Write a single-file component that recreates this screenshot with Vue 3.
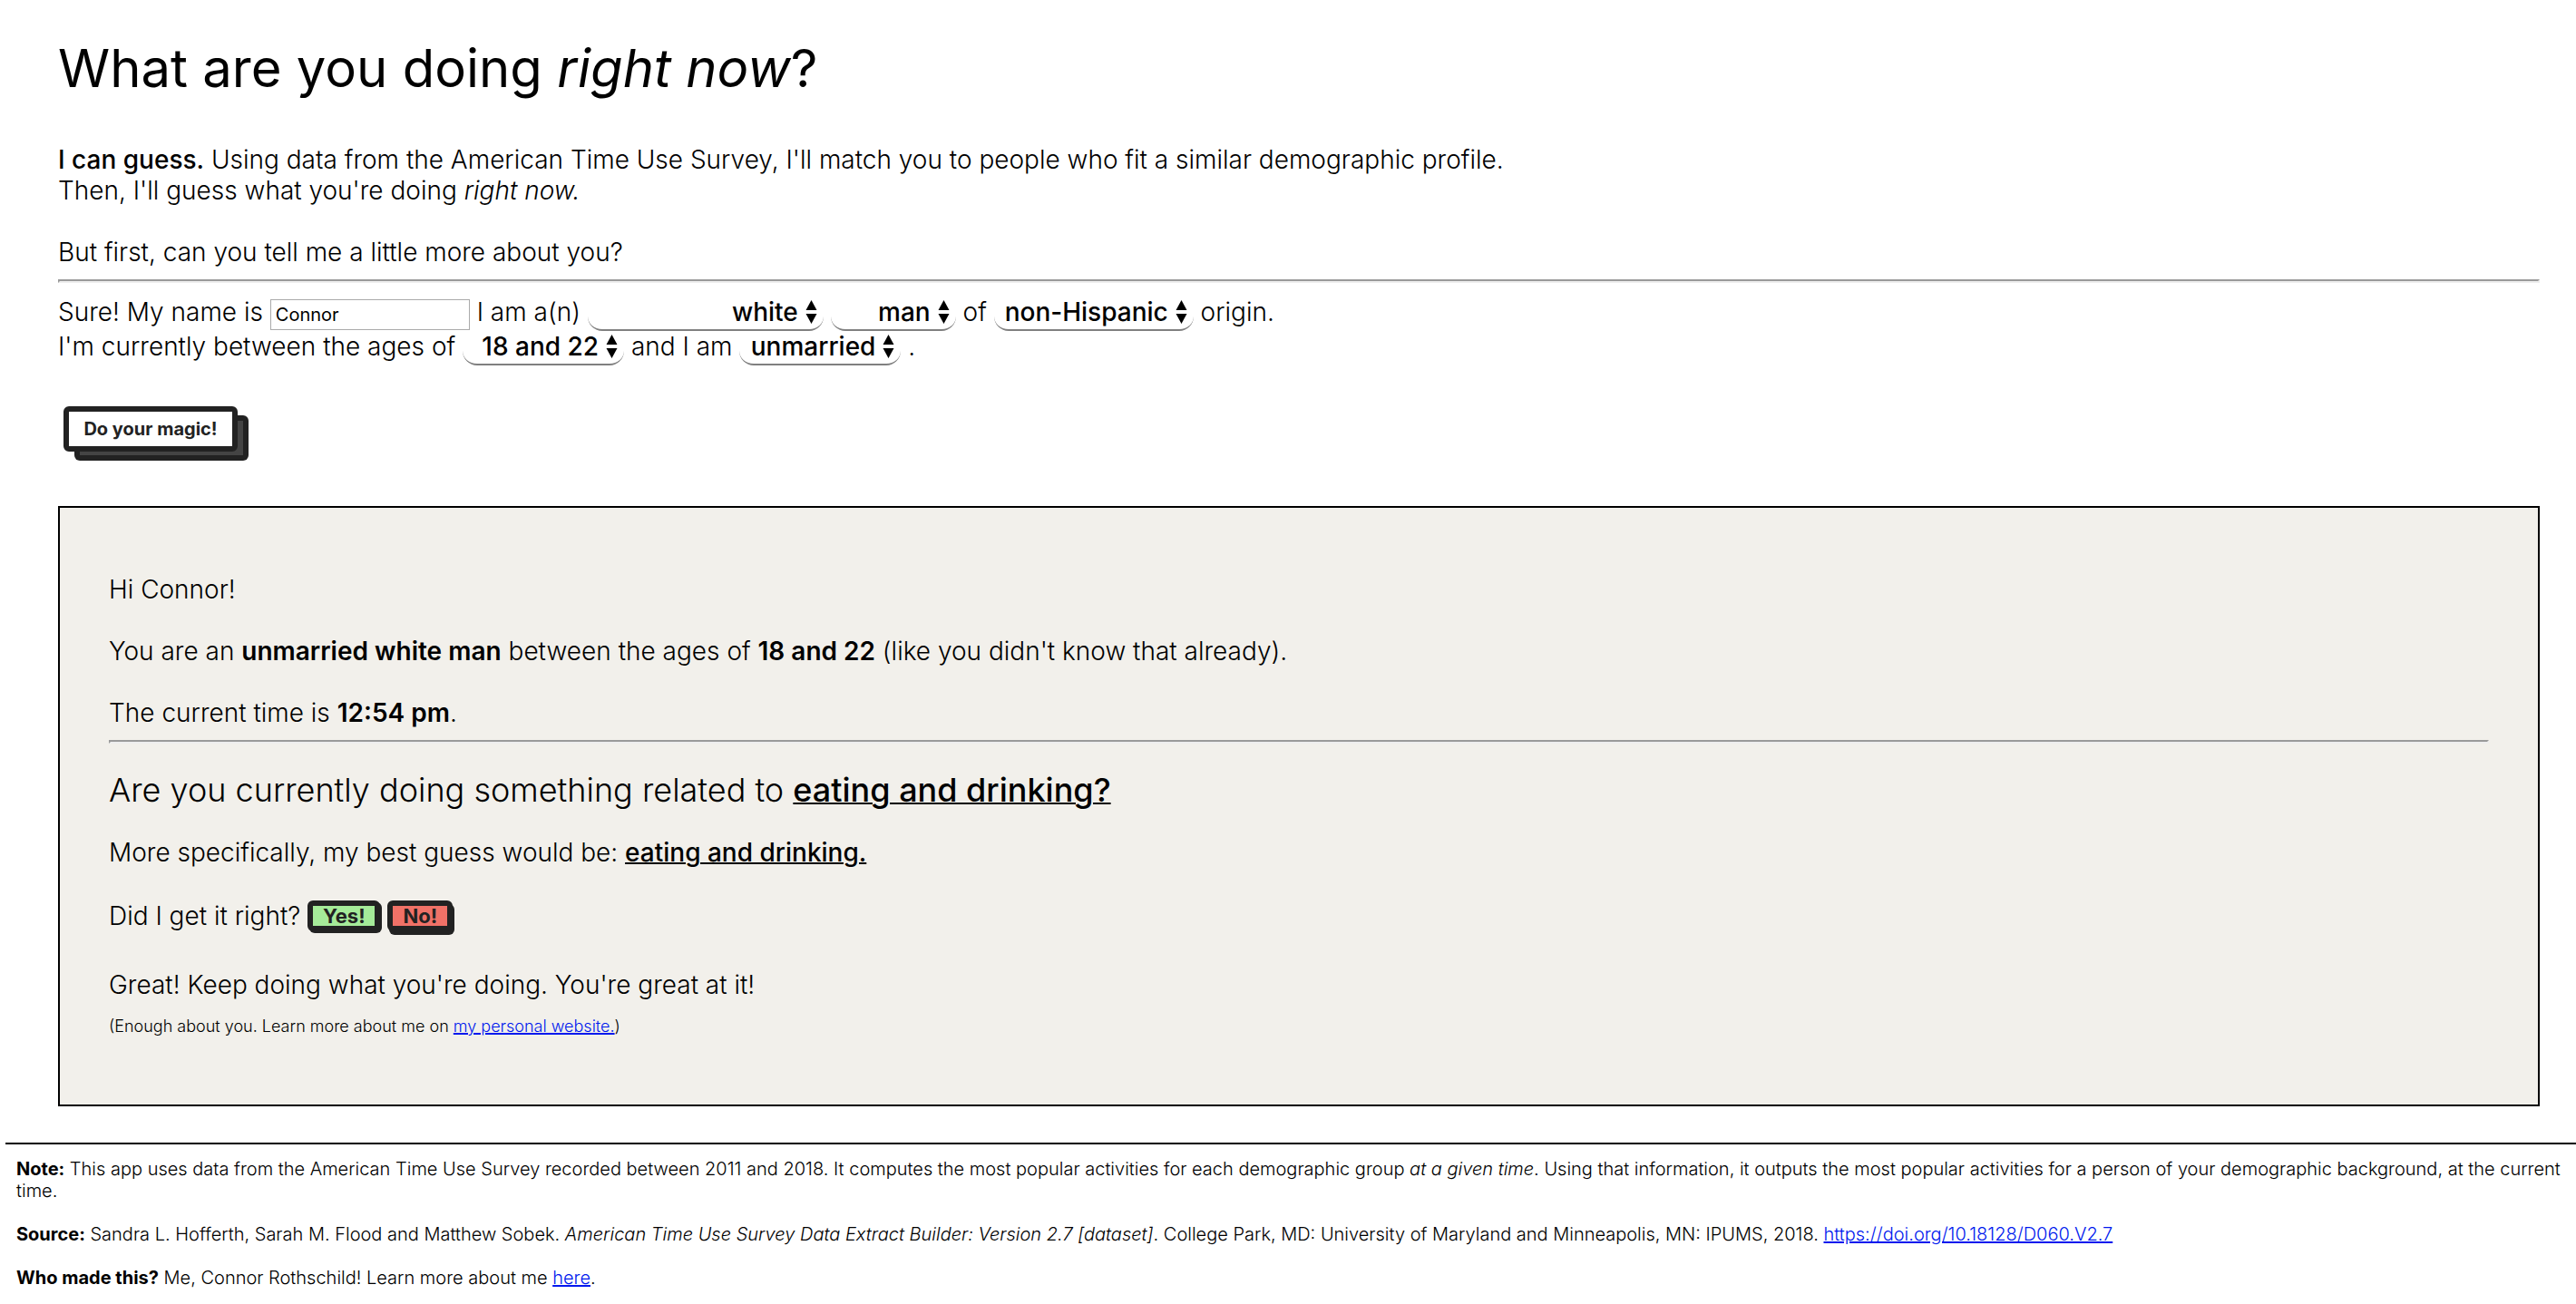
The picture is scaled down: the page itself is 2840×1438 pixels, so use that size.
<script setup>
import { reactive } from 'vue'

const profile = reactive({
  name: 'Connor',
  race: 'white',
  sex: 'man',
  origin: 'non-Hispanic',
  age: '18 and 22',
  status: 'unmarried',
})

const options = {
  race: ['white', 'Black', 'Asian', 'American Indian'],
  sex: ['man', 'woman'],
  origin: ['non-Hispanic', 'Hispanic'],
  age: ['18 and 22', '23 and 30', '31 and 45', '46 and 64'],
  status: ['unmarried', 'married'],
}

const labels = {
  race: 'Race',
  sex: 'Sex',
  origin: 'Origin',
  age: 'Age range',
  status: 'Marital status',
}

const rows = [
  [
    { text: 'Sure! My name is ' },
    { input: 'name' },
    { text: ' I am a(n) ' },
    { select: 'race' },
    { text: ' ' },
    { select: 'sex' },
    { text: ' of ' },
    { select: 'origin' },
    { text: ' origin.' },
  ],
  [
    { text: "I'm currently between the ages of " },
    { select: 'age' },
    { text: ' and I am ' },
    { select: 'status' },
    { text: ' .' },
  ],
]
</script>

<template>
  <div class="page">
    <main>
      <h1>What are you doing <em>right now</em>?</h1>
      <p class="intro">
        <strong>I can guess.</strong> Using data from the American Time Use Survey, I'll match you to people who fit a similar demographic profile.<br />
        Then, I'll guess what you're doing <em>right now.</em>
      </p>
      <p class="lead">But first, can you tell me a little more about you?</p>
      <hr />
      <form @submit.prevent>
        <div v-for="(row, i) in rows" :key="i" class="row">
          <template v-for="(part, j) in row" :key="j">
            <input v-if="part.input" v-model="profile.name" type="text" aria-label="Name" />
            <span v-else-if="part.select" class="pick" :class="part.select">
              <select v-model="profile[part.select]" :aria-label="labels[part.select]">
                <option v-for="o in options[part.select]" :key="o">{{ o }}</option>
              </select>
              <svg viewBox="0 0 12 26" aria-hidden="true"><path d="M6 0l6 11H0zM6 26l6-11H0z" /></svg>
            </span>
            <span v-else class="words">{{ part.text }}</span>
          </template>
        </div>
        <button type="submit" class="btn magic">Do your magic!</button>
      </form>

      <section class="result">
        <p>Hi {{ profile.name }}!</p>
        <p>
          You are an <b>{{ profile.status }} {{ profile.race }} {{ profile.sex }}</b> between the ages of
          <b>{{ profile.age }}</b> (like you didn't know that already).
        </p>
        <p>The current time is <b>12:54 pm</b>.</p>
        <hr />
        <h2>Are you currently doing something related to <u>eating and drinking?</u></h2>
        <p>More specifically, my best guess would be: <u>eating and drinking.</u></p>
        <div class="answer">
          <span>Did I get it right?</span>
          <button type="button" class="btn yes">Yes!</button>
          <button type="button" class="btn no">No!</button>
        </div>
        <p class="great">Great! Keep doing what you're doing. You're great at it!</p>
        <p class="small">(Enough about you. Learn more about me on <a href="#">my personal website.</a>)</p>
      </section>
    </main>

    <footer>
      <p>
        <b>Note:</b> This app uses data from the American Time Use Survey recorded between 2011 and 2018. It computes the most popular activities for each demographic group <em>at a given time</em>. Using that information, it outputs the most popular activities for a person of your demographic background, at the current time.
      </p>
      <p>
        <b>Source:</b> Sandra L. Hofferth, Sarah M. Flood and Matthew Sobek. <em>American Time Use Survey Data Extract Builder: Version 2.7 [dataset]</em>. College Park, MD: University of Maryland and Minneapolis, MN: IPUMS, 2018. <a href="#">https://doi.org/10.18128/D060.V2.7</a>
      </p>
      <p><b>Who made this?</b> Me, Connor Rothschild! Learn more about me <a href="#">here</a>.</p>
    </footer>
  </div>
</template>

<style>
body {
  margin: 0;
  background: #fff;
}
</style>

<style scoped>
.page {
  font-family: Inter, sans-serif;
  font-size: 28px;
  font-weight: 300;
  line-height: 34px;
  color: #000;
}
main {
  padding: 38px 40px 0 64px;
}
h1 {
  margin: 0;
  font-size: 58px;
  font-weight: 400;
  line-height: 74px;
}
p {
  margin: 0;
}
strong,
u {
  font-weight: 500;
}
b {
  font-weight: 600;
}
a {
  color: #0019ee;
}
u,
a {
  text-decoration-thickness: 2px;
}
hr {
  height: 0;
  margin: 13px 0 15px;
  border: 2px solid;
  border-color: #9a9a9a #eee #eee #9a9a9a;
}
.intro {
  margin-top: 47px;
}
.lead {
  margin-top: 34px;
}
.row {
  display: flex;
  align-items: baseline;
  height: 38px;
}
.words {
  white-space: pre;
}
input {
  box-sizing: border-box;
  width: 220px;
  height: 34px;
  padding: 4px 5px;
  border: 1px solid #aaa;
  background: #fff;
  font: 400 20px/24px Inter, sans-serif;
  color: #000;
}
.pick {
  position: relative;
}
select {
  width: 100%;
  padding: 0 28px 2px 12px;
  border: 0;
  border-bottom: 2px solid #808080;
  border-radius: 16px;
  appearance: none;
  background: transparent;
  font: 500 28px/34px Inter, sans-serif;
  color: #000;
  text-align-last: right;
}
.pick svg {
  position: absolute;
  top: 4px;
  right: 7px;
  width: 13px;
  height: 26px;
  pointer-events: none;
}
.race {
  width: 260px;
}
.sex {
  width: 138px;
}
.origin {
  width: 220px;
}
.age,
.status {
  width: 178px;
}
.btn {
  border: 6px solid #222;
  border-radius: 6px;
  font: 700 20px/24px Inter, sans-serif;
  color: #222;
}
.magic {
  display: block;
  min-width: 192px;
  margin: 45px 6px 0;
  padding: 7px 14px;
  background: #fff;
  box-shadow: 12px 10px 0 -6px #444, 12px 10px 0 0 #222;
}
.result {
  margin-top: 60px;
  padding: 73px 54px 75px;
  border: 2px solid #000;
  background: #f2f0eb;
}
.result p + p {
  margin-top: 34px;
}
h2 {
  margin: 29px 0 30px;
  font-size: 36px;
  font-weight: 300;
  line-height: 44px;
}
.answer {
  display: flex;
  align-items: center;
  gap: 8px;
  margin-top: 36px;
}
.yes,
.no {
  padding: 0 10px;
  font-size: 22px;
  line-height: 22px;
  box-shadow: 2px 2px 0 #222;
}
.yes {
  min-width: 80px;
  background: #a5eb99;
}
.no {
  min-width: 72px;
  background: #f07167;
  box-shadow: 2px 4px 0 #222;
}
.great {
  margin-top: 42px;
}
.result .small {
  margin-top: 18px;
  font-size: 18px;
  line-height: 22px;
}
footer {
  margin: 40px 0 0 6px;
  padding: 15px 12px;
  border-top: 2px solid #000;
  font-size: 20px;
  line-height: 24px;
}
footer p + p {
  margin-top: 24px;
}
footer b {
  font-weight: 700;
}
</style>
